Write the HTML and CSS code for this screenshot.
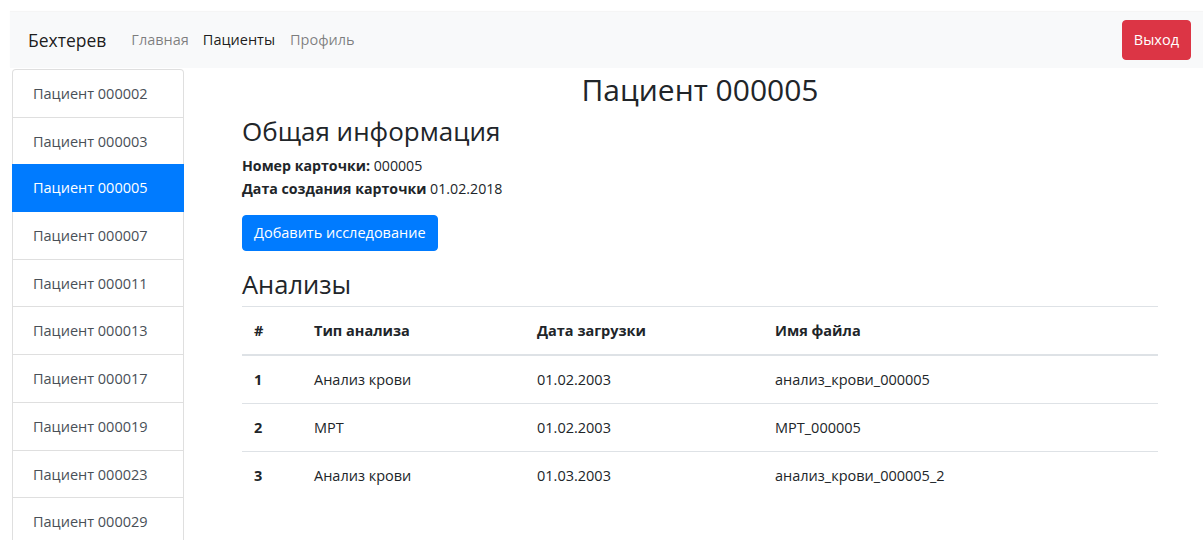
FILE: index.html
```html
<!DOCTYPE html>
<html lang="ru">
<head>
<meta charset="utf-8">
<title>Бехтерев — Пациент 000005</title>
<link rel="stylesheet" href="styles.css">
</head>
<body>
<nav class="navbar">
  <a class="brand" href="#">Бехтерев</a>
  <ul class="nav">
    <li><a class="nav-link" href="#">Главная</a></li>
    <li><a class="nav-link active" href="#">Пациенты</a></li>
    <li><a class="nav-link" href="#">Профиль</a></li>
  </ul>
  <button class="btn btn-danger">Выход</button>
</nav>
<div class="layout">
  <aside class="patients">
    <a class="item" href="#">Пациент 000002</a>
    <a class="item" href="#">Пациент 000003</a>
    <a class="item active" href="#">Пациент 000005</a>
    <a class="item" href="#">Пациент 000007</a>
    <a class="item" href="#">Пациент 000011</a>
    <a class="item" href="#">Пациент 000013</a>
    <a class="item" href="#">Пациент 000017</a>
    <a class="item" href="#">Пациент 000019</a>
    <a class="item" href="#">Пациент 000023</a>
    <a class="item" href="#">Пациент 000029</a>
  </aside>
  <main class="content">
    <h1 class="title">Пациент 000005</h1>
    <h2 class="section">Общая информация</h2>
    <p class="info"><b>Номер карточки:</b> 000005</p>
    <p class="info"><b>Дата создания карточки</b> 01.02.2018</p>
    <button class="btn btn-primary">Добавить исследование</button>
    <h3 class="subsection">Анализы</h3>
    <table class="table">
      <thead>
        <tr><th class="c-num">#</th><th class="c-type">Тип анализа</th><th class="c-date">Дата загрузки</th><th>Имя файла</th></tr>
      </thead>
      <tbody>
        <tr><th>1</th><td>Анализ крови</td><td>01.02.2003</td><td>анализ_крови_000005</td></tr>
        <tr><th>2</th><td>МРТ</td><td>01.02.2003</td><td>МРТ_000005</td></tr>
        <tr><th>3</th><td>Анализ крови</td><td>01.03.2003</td><td>анализ_крови_000005_2</td></tr>
      </tbody>
    </table>
  </main>
</div>
</body>
</html>
```
FILE: styles.css
```css
* { box-sizing: border-box; }

body {
  margin: 0;
  padding: 12px 0 0 10px;
  font-family: "Open Sans", "Noto Sans", sans-serif;
  font-size: 14.5px;
  line-height: 1.5;
  color: #212529;
  background: #fff;
}

a { text-decoration: none; }

/* top bar */
.navbar {
  display: flex;
  align-items: center;
  height: 56px;
  padding: 0 12px 0 18px;
  background: #f8f9fa;
  box-shadow: 0 -1px 1px rgba(0,0,0,.04);
}
.brand {
  font-size: 17.5px;
  color: rgba(0,0,0,.9);
  margin-right: 18px;
}
.nav {
  display: flex;
  list-style: none;
  margin: 0;
  padding: 0;
  flex: 1;
}
.nav-link {
  display: block;
  padding: 8px 7px;
  color: rgba(0,0,0,.5);
}
.nav-link.active { color: rgba(0,0,0,.9); margin-right: 1px; }

.btn {
  font-family: inherit;
  font-size: 14.5px;
  line-height: 1.5;
  border: 1px solid transparent;
  border-radius: 4px;
  padding: 6px 11px;
  color: #fff;
  cursor: pointer;
}
.btn-danger { background: #dc3545; border-color: #dc3545; height: 40px; }
.btn-primary { background: #007bff; border-color: #007bff; height: 36px; padding: 5px 11px; }

/* two columns */
.layout {
  display: flex;
  align-items: flex-start;
  margin-top: 1px;
}
.patients {
  width: 172px;
  margin-left: 2px;
  display: flex;
  flex-direction: column;
  border: 1px solid rgba(0,0,0,.125);
  border-radius: 4px 4px 0 0;
  border-bottom: 0;
}
.patients .item {
  display: block;
  height: 47.7px;
  padding: 13px 20px 9px;
  color: #495057;
  border-bottom: 1px solid rgba(0,0,0,.125);
  white-space: nowrap;
}
.patients .item.active {
  background: #007bff;
  color: #fff;
  margin: -1px -1px 0;
  padding-left: 21px;
  border-bottom-color: #007bff;
}

.content {
  flex: 1;
  padding: 0 45px 0 58px;
}
.title {
  margin: 0;
  text-align: center;
  font-size: 30px;
  font-weight: 500;
  line-height: 38px;
  padding-top: 2px;
}
.section {
  margin: 6px 0 0;
  font-size: 26px;
  font-weight: 500;
  line-height: 33px;
}
.info {
  margin: 6px 0 0;
  font-size: 14.2px;
  line-height: 23px;
}
.info + .info { margin-top: 0; }
.info b { font-weight: 700; }
.btn-primary { margin-top: 15px; }

.subsection {
  margin: 17px 0 0;
  font-size: 25.5px;
  font-weight: 500;
  line-height: 33px;
  padding-bottom: 5px;
}

.table {
  width: 100%;
  border-collapse: collapse;
  font-size: 14.5px;
}
.table th, .table td {
  text-align: left;
  padding: 12px 12px 12px;
  line-height: 23px;
  border-top: 1px solid #dee2e6;
  vertical-align: top;
}
.table thead th {
  border-bottom: 2px solid #dee2e6;
  font-weight: 700;
}
.table tbody th { font-weight: 700; }
.table tbody tr:first-child th,
.table tbody tr:first-child td { border-top: 0; }
.c-num { width: 60px; }
.c-type { width: 223px; }
.c-date { width: 238px; }
```
